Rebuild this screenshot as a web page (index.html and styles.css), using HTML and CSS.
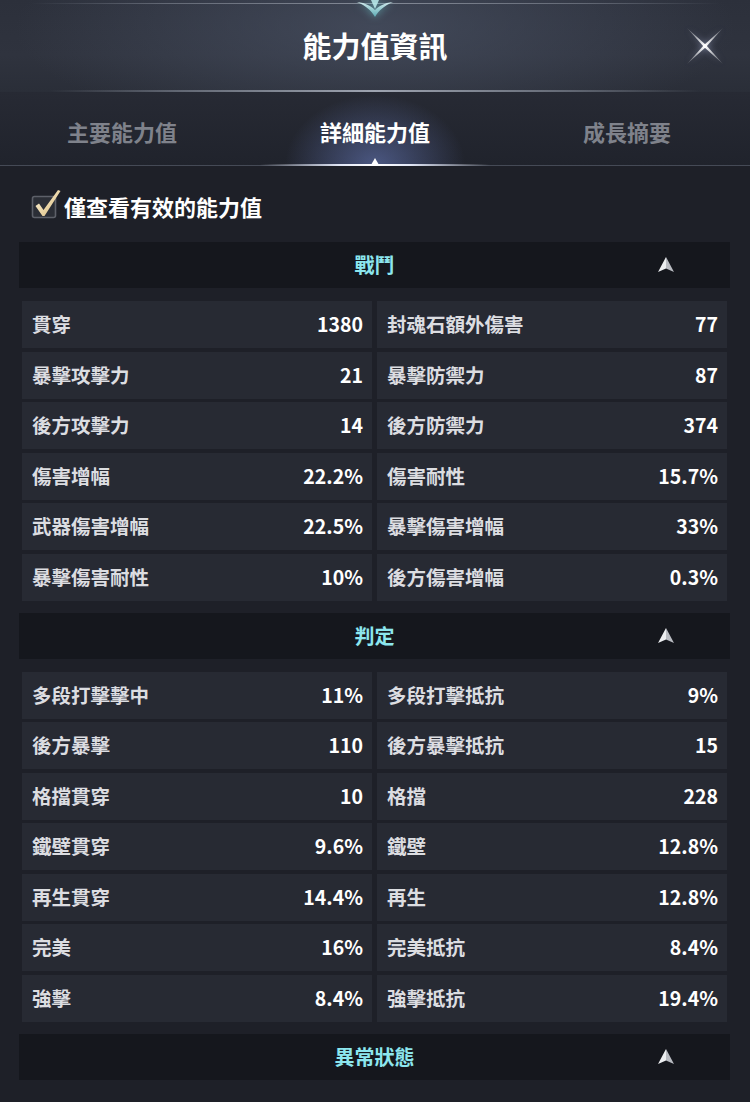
FILE: index.html
```html
<!DOCTYPE html>
<html lang="zh-Hant">
<head>
<meta charset="utf-8">
<title>能力值資訊</title>
<link rel="stylesheet" href="styles.css">
</head>
<body>
<div class="app">
  <header class="topbar">
    <svg class="crest" width="80" height="22" viewBox="0 0 80 22">
      <defs>
        <linearGradient id="cg" x1="0" y1="0" x2="0" y2="1">
          <stop offset="0" stop-color="#dff9fa"/>
          <stop offset="1" stop-color="#5fb5bd"/>
        </linearGradient>
      </defs>
      <path d="M40 17 C36 10 31 6 22 2 C31 3 36 6 40 10 C44 6 49 3 58 2 C49 6 44 10 40 17 Z" fill="url(#cg)" opacity="0.9"/>
      <path d="M40 9 L36 0 L44 0 Z" fill="#bdeef0" opacity="0.85"/>
    </svg>
    <h1 class="title">能力值資訊</h1>
    <button class="close" aria-label="close">
      <svg width="44" height="44" viewBox="0 0 44 44">
        <defs>
          <linearGradient id="xg" x1="0" y1="0" x2="1" y2="1">
            <stop offset="0" stop-color="#ffffff" stop-opacity="0.15"/>
            <stop offset="0.5" stop-color="#ffffff"/>
            <stop offset="1" stop-color="#ffffff" stop-opacity="0.15"/>
          </linearGradient>
          <linearGradient id="xg2" x1="1" y1="0" x2="0" y2="1">
            <stop offset="0" stop-color="#ffffff" stop-opacity="0.15"/>
            <stop offset="0.5" stop-color="#ffffff"/>
            <stop offset="1" stop-color="#ffffff" stop-opacity="0.15"/>
          </linearGradient>
        </defs>
        <polygon points="4,4 23,21 40,40 21,23" fill="url(#xg)"/>
        <polygon points="40,4 23,23 4,40 21,21" fill="url(#xg2)"/>
        <circle cx="22" cy="22" r="1.8" fill="#ffffff" opacity="0.8"/>
      </svg>
    </button>
  </header>

  <nav class="tabs">
    <div class="tab">主要能力值</div>
    <div class="tab active">詳細能力值</div>
    <div class="tab">成長摘要</div>
  </nav>

  <main class="content">
    <label class="filter">
      <span class="check">
        <svg width="30" height="30" viewBox="0 0 30 30">
          <defs>
            <linearGradient id="ckg" x1="0" y1="0" x2="1" y2="1">
              <stop offset="0" stop-color="#fff6dc"/>
              <stop offset="1" stop-color="#d8b878"/>
            </linearGradient>
          </defs>
          <rect x="1.5" y="7.5" width="23" height="21" rx="2" fill="#2b2e36" stroke="#5d6069" stroke-width="1.6"/>
          <path d="M4.5 17 L8 14.5 L12.5 21 L27 1 L29.5 2 L13.5 27 L11.5 27 Z" fill="url(#ckg)"/>
        </svg>
      </span>
      <span class="filter-text">僅查看有效的能力值</span>
    </label>

    <section class="group">
      <div class="group-head"><span class="group-title">戰鬥</span><svg class="fold" width="20" height="20" viewBox="0 0 20 20"><path d="M10 2 L18 17 L10 13.5 Z" fill="#b9bcc2"/><path d="M10 2 L2 17 L10 13.5 Z" fill="#eceef0"/></svg></div>
      <div class="grid">
        <div class="cell"><span>貫穿</span><b>1380</b></div>
        <div class="cell"><span>封魂石額外傷害</span><b>77</b></div>
        <div class="cell"><span>暴擊攻擊力</span><b>21</b></div>
        <div class="cell"><span>暴擊防禦力</span><b>87</b></div>
        <div class="cell"><span>後方攻擊力</span><b>14</b></div>
        <div class="cell"><span>後方防禦力</span><b>374</b></div>
        <div class="cell"><span>傷害增幅</span><b>22.2%</b></div>
        <div class="cell"><span>傷害耐性</span><b>15.7%</b></div>
        <div class="cell"><span>武器傷害增幅</span><b>22.5%</b></div>
        <div class="cell"><span>暴擊傷害增幅</span><b>33%</b></div>
        <div class="cell"><span>暴擊傷害耐性</span><b>10%</b></div>
        <div class="cell"><span>後方傷害增幅</span><b>0.3%</b></div>
      </div>
    </section>

    <section class="group">
      <div class="group-head"><span class="group-title">判定</span><svg class="fold" width="20" height="20" viewBox="0 0 20 20"><path d="M10 2 L18 17 L10 13.5 Z" fill="#b9bcc2"/><path d="M10 2 L2 17 L10 13.5 Z" fill="#eceef0"/></svg></div>
      <div class="grid">
        <div class="cell"><span>多段打擊擊中</span><b>11%</b></div>
        <div class="cell"><span>多段打擊抵抗</span><b>9%</b></div>
        <div class="cell"><span>後方暴擊</span><b>110</b></div>
        <div class="cell"><span>後方暴擊抵抗</span><b>15</b></div>
        <div class="cell"><span>格擋貫穿</span><b>10</b></div>
        <div class="cell"><span>格擋</span><b>228</b></div>
        <div class="cell"><span>鐵壁貫穿</span><b>9.6%</b></div>
        <div class="cell"><span>鐵壁</span><b>12.8%</b></div>
        <div class="cell"><span>再生貫穿</span><b>14.4%</b></div>
        <div class="cell"><span>再生</span><b>12.8%</b></div>
        <div class="cell"><span>完美</span><b>16%</b></div>
        <div class="cell"><span>完美抵抗</span><b>8.4%</b></div>
        <div class="cell"><span>強擊</span><b>8.4%</b></div>
        <div class="cell"><span>強擊抵抗</span><b>19.4%</b></div>
      </div>
    </section>

    <section class="group">
      <div class="group-head"><span class="group-title">異常狀態</span><svg class="fold" width="20" height="20" viewBox="0 0 20 20"><path d="M10 2 L18 17 L10 13.5 Z" fill="#b9bcc2"/><path d="M10 2 L2 17 L10 13.5 Z" fill="#eceef0"/></svg></div>
    </section>
  </main>
</div>
</body>
</html>
```

FILE: styles.css
```css
* { box-sizing: border-box; }
html, body {
  margin: 0;
  padding: 0;
  background: #1e2028;
}
body {
  font-family: "Noto Sans CJK TC", "Noto Sans", sans-serif;
  color: #e6e7ea;
  width: 750px;
  height: 1102px;
  overflow: hidden;
}
.app {
  width: 750px;
  min-height: 1102px;
  background: #1e2028;
}

/* ===== Top bar ===== */
.topbar {
  position: relative;
  height: 92px;
  display: flex;
  align-items: center;
  justify-content: center;
  background:
    radial-gradient(ellipse 360px 110px at 50% 30%, rgba(72,80,98,0.75), rgba(72,80,98,0) 100%),
    linear-gradient(180deg, #2c303b 0%, #2f333e 60%, #2a2e38 100%);
}
.topbar::before {
  content: "";
  position: absolute;
  left: 30px;
  right: 30px;
  top: 3px;
  height: 1px;
  background: linear-gradient(90deg, rgba(120,126,138,0), rgba(120,126,138,0.7) 20%, rgba(150,156,168,0.8) 50%, rgba(120,126,138,0.7) 80%, rgba(120,126,138,0));
}
.topbar::after {
  content: "";
  position: absolute;
  left: 50px;
  right: 50px;
  bottom: 0;
  height: 2px;
  background: linear-gradient(90deg, rgba(110,116,128,0), rgba(120,126,138,0.7) 20%, rgba(170,176,188,0.9) 50%, rgba(120,126,138,0.7) 80%, rgba(110,116,128,0));
}
.crest {
  position: absolute;
  left: 335px;
  top: 0;
  filter: drop-shadow(0 0 4px rgba(120,220,225,0.7));
}
.title {
  margin: 0;
  font-size: 29px;
  font-weight: 700;
  color: #ffffff;
  line-height: 1;
  padding-bottom: 1px;
}
.close {
  position: absolute;
  right: 23px;
  top: 24px;
  width: 44px;
  height: 44px;
  padding: 0;
  border: 0;
  background: none;
  filter: drop-shadow(0 0 3px rgba(200,210,255,0.6));
}
.close svg { display: block; }

/* ===== Tabs ===== */
.tabs {
  position: relative;
  height: 74px;
  display: grid;
  grid-template-columns: 1fr 1fr 1fr;
  align-items: center;
  padding-top: 5px;
  background:
    radial-gradient(ellipse 90px 70px at 50% 100%, rgba(110,130,200,0.55), rgba(110,130,200,0) 100%),
    linear-gradient(180deg, #272a34 0%, #20232c 100%);
  border-bottom: 1px solid #454a56;
}
.tabs::after {
  content: "";
  position: absolute;
  left: 260px;
  width: 230px;
  bottom: -1px;
  height: 2px;
  background: linear-gradient(90deg, rgba(255,255,255,0), rgba(235,240,255,0.95) 35%, #ffffff 50%, rgba(235,240,255,0.95) 65%, rgba(255,255,255,0));
}
.tabs::before {
  content: "";
  position: absolute;
  left: 371px;
  bottom: 0;
  width: 0;
  height: 0;
  border-left: 4px solid transparent;
  border-right: 4px solid transparent;
  border-bottom: 7px solid #ffffff;
}
.tab {
  text-align: center;
  font-size: 22px;
  font-weight: 700;
  color: #7f828b;
  line-height: 1;
}
.tab:first-child { padding-right: 6px; }
.tab:last-child { padding-left: 4px; }
.tab.active { color: #ffffff; }

/* ===== Content ===== */
.content {
  padding: 16px 20px 0 19px;
}
.filter {
  display: flex;
  align-items: center;
  height: 48px;
  padding-left: 12px;
  gap: 3px;
}
.check {
  width: 30px;
  height: 30px;
  margin-top: -4px;
}
.check svg { display: block; }
.filter-text {
  font-size: 22px;
  font-weight: 700;
  color: #ffffff;
  line-height: 1;
}

.group { margin-top: 12px; }
.group + .group { margin-top: 12px; }
.group-head {
  position: relative;
  height: 46px;
  display: flex;
  align-items: center;
  justify-content: center;
  background: #15171d;
}
.group-title {
  font-size: 20px;
  font-weight: 700;
  color: #8ce6ee;
  line-height: 1;
}
.fold {
  position: absolute;
  right: 54px;
  top: 13px;
}
.grid {
  margin-top: 13px;
  padding: 0 3px;
  display: grid;
  grid-template-columns: 1fr 1fr;
  column-gap: 5px;
  row-gap: 3.5px;
}
.cell {
  height: 47px;
  display: flex;
  align-items: center;
  justify-content: space-between;
  padding: 0 9px 1px 10px;
  background: #272a33;
}
.cell span {
  font-size: 19.5px;
  font-weight: 700;
  color: #dcdde1;
  line-height: 1;
}
.cell b {
  font-size: 19.5px;
  font-weight: 700;
  color: #ffffff;
  line-height: 1;
}
```
